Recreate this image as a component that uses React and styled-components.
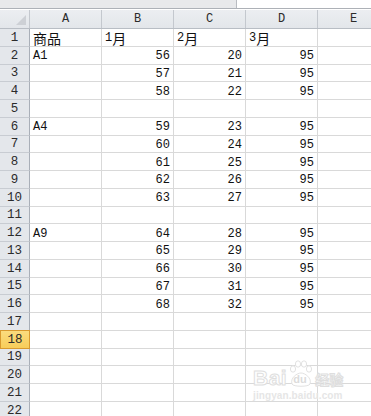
import React from 'react';
import styled, { createGlobalStyle } from 'styled-components';

const GlobalStyle = createGlobalStyle`
  html, body {
    margin: 0;
    padding: 0;
    background: #ffffff;
    overflow: hidden;
  }
`;

const COLS = ['A', 'B', 'C', 'D', 'E'];
const ACTIVE_ROW = 18;
const ROW_H = 17.76;

const DATA = {
  1: ['商品', '1月', '2月', '3月'],
  2: ['A1', 56, 20, 95],
  3: ['', 57, 21, 95],
  4: ['', 58, 22, 95],
  6: ['A4', 59, 23, 95],
  7: ['', 60, 24, 95],
  8: ['', 61, 25, 95],
  9: ['', 62, 26, 95],
  10: ['', 63, 27, 95],
  12: ['A9', 64, 28, 95],
  13: ['', 65, 29, 95],
  14: ['', 66, 30, 95],
  15: ['', 67, 31, 95],
  16: ['', 68, 32, 95],
};

const App = () => {
  const rows = Array.from({ length: 22 }, (_, i) => i + 1);

  // split latin / cjk so each gets its own size
  const renderText = (text) =>
    String(text)
      .split(/([\u4e00-\u9fff]+)/)
      .filter(Boolean)
      .map((part, i) =>
        /[\u4e00-\u9fff]/.test(part) ? <Han key={i}>{part}</Han> : <span key={i}>{part}</span>
      );

  return (
    <>
      <GlobalStyle />
      <Sheet>
        <TopBar>
          <NameBox />
          <FormulaBox />
        </TopBar>
        <HeaderRow>
          <Corner>
            <CornerMark />
          </Corner>
          {COLS.map((c) => (
            <ColHead key={c}>{c}</ColHead>
          ))}
        </HeaderRow>
        {rows.map((r) => (
          <Row key={r}>
            <RowHead $active={r === ACTIVE_ROW}>{r}</RowHead>
            {COLS.map((c, ci) => {
              const v = DATA[r] ? DATA[r][ci] : undefined;
              const isNum = typeof v === 'number';
              return (
                <Cell key={c} $num={isNum}>
                  {v !== undefined && v !== '' ? renderText(v) : null}
                </Cell>
              );
            })}
          </Row>
        ))}

        <Watermark>
          <MarkTop>
            <BrandText>Bai</BrandText>
            <Paw>
              <svg width="26" height="28" viewBox="0 0 26 28">
                <g fill="#ffffff" stroke="#e2e2e2" strokeWidth="1">
                  <ellipse cx="5" cy="9" rx="2.6" ry="3.2" />
                  <ellipse cx="10" cy="4" rx="2.6" ry="3.2" />
                  <ellipse cx="16" cy="4" rx="2.6" ry="3.2" />
                  <ellipse cx="21" cy="9" rx="2.6" ry="3.2" />
                  <path d="M4 24 C2 18 9 13 13 13 C17 13 24 18 22 24 C21 27 5 27 4 24 Z" />
                </g>
              </svg>
              <PawText>du</PawText>
            </Paw>
            <BrandHan>经验</BrandHan>
          </MarkTop>
          <MarkUrl>jingyan.baidu.com</MarkUrl>
        </Watermark>
      </Sheet>
    </>
  );
};

export default App;

const Sheet = styled.div`
  position: relative;
  width: 371px;
  height: 416px;
  overflow: hidden;
  background: #ffffff;
  font-family: 'Liberation Mono', 'Noto Sans CJK SC', monospace;
  color: #111111;
`;

const TopBar = styled.div`
  display: flex;
  height: 8px;
  border-bottom: 1px solid #adb1b7;
  margin-bottom: 1px;
`;

const NameBox = styled.div`
  width: 236px;
  background: #e8e9eb;
  border-right: 1px solid #b9bcc1;
`;

const FormulaBox = styled.div`
  flex: 1;
  background: #ffffff;
`;

const HeaderRow = styled.div`
  display: flex;
  height: 19px;
  box-sizing: border-box;
  background: linear-gradient(#eceef1, #e3e6ea);
  border-bottom: 1px solid #b8bdc4;
`;

const Corner = styled.div`
  position: relative;
  flex: none;
  width: 30px;
  box-sizing: border-box;
  border-right: 1px solid #c4c8ce;
`;

const CornerMark = styled.div`
  position: absolute;
  right: 3px;
  bottom: 3px;
  width: 0;
  height: 0;
  border-left: 10px solid transparent;
  border-bottom: 10px solid #cdd0d5;
`;

const ColHead = styled.div`
  flex: none;
  width: 72px;
  box-sizing: border-box;
  border-right: 1px solid #c4c8ce;
  display: flex;
  align-items: center;
  justify-content: center;
  font-size: 12px;
  color: #2b2b2b;
`;

const Row = styled.div`
  display: flex;
  height: ${ROW_H}px;
`;

const RowHead = styled.div`
  flex: none;
  width: 30px;
  box-sizing: border-box;
  display: flex;
  align-items: center;
  justify-content: center;
  padding-top: 1px;
  font-size: 12.5px;
  color: #2b2b2b;
  background: ${(p) => (p.$active ? 'linear-gradient(#fbdc7e, #f8cd5a)' : '#e4e7eb')};
  border-bottom: 1px solid ${(p) => (p.$active ? '#d99a2e' : '#c8ccd2')};
  border-right: 1px solid ${(p) => (p.$active ? '#d99a2e' : '#a9afb8')};
  border-top: ${(p) => (p.$active ? '1px solid #d99a2e' : 'none')};
  border-left: ${(p) => (p.$active ? '1px solid #d99a2e' : 'none')};
  margin-top: ${(p) => (p.$active ? '-1px' : '0')};
  height: ${(p) => (p.$active ? `${ROW_H + 1}px` : 'auto')};
`;

const Cell = styled.div`
  flex: none;
  width: 72px;
  box-sizing: border-box;
  border-right: 1px solid #d9d9d9;
  border-bottom: 1px solid #d9d9d9;
  display: flex;
  align-items: center;
  justify-content: ${(p) => (p.$num ? 'flex-end' : 'flex-start')};
  padding: 2px 3px 0 3px;
  font-size: 12px;
  white-space: nowrap;
  overflow: visible;
`;

const Han = styled.span`
  font-family: 'Noto Sans CJK SC', sans-serif;
  font-size: 14px;
  line-height: 14px;
`;

const Watermark = styled.div`
  position: absolute;
  left: 253px;
  top: 360px;
  display: flex;
  flex-direction: column;
  align-items: flex-start;
  pointer-events: none;
`;

const MarkTop = styled.div`
  display: flex;
  align-items: flex-end;
  gap: 1px;
`;

const BrandText = styled.span`
  font-family: 'Liberation Sans', Arial, sans-serif;
  font-weight: 700;
  font-size: 21px;
  line-height: 21px;
  color: #ffffff;
  -webkit-text-stroke: 1px #dedede;
  letter-spacing: 0.5px;
`;

const Paw = styled.div`
  position: relative;
  width: 26px;
  height: 28px;
  display: flex;
`;

const PawText = styled.span`
  position: absolute;
  left: 5px;
  bottom: 3px;
  font-family: 'Liberation Sans', Arial, sans-serif;
  font-weight: 700;
  font-size: 11px;
  line-height: 11px;
  color: #dcdcdc;
`;

const BrandHan = styled.span`
  font-family: 'Noto Sans CJK SC', sans-serif;
  font-weight: 700;
  font-size: 14px;
  line-height: 18px;
  color: #ffffff;
  -webkit-text-stroke: 1px #dedede;
`;

const MarkUrl = styled.span`
  margin-top: 3px;
  font-family: 'Liberation Sans', Arial, sans-serif;
  font-weight: 700;
  font-size: 10px;
  line-height: 10px;
  color: #e6e6e6;
  letter-spacing: 0.1px;
`;
